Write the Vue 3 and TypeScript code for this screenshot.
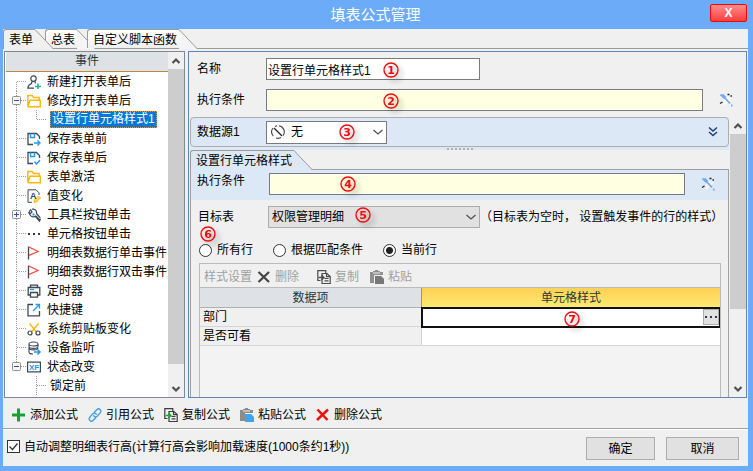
<script setup lang="ts">
import { h, ref, type FunctionalComponent } from 'vue'

interface Stroke {
  d: string
  c?: string
  w?: number
  f?: string
}
interface Glyph {
  paths: Stroke[]
  text?: { value: string; x: number; y: number; size: number; c: string }
}

const ink = '#3f4856'
const blue = '#1f9bef'
const gold = '#fbb80f'

const copyPaths = (c: string, arrow: string): Stroke[] => [
  { d: 'M3.500 10.500H.8V.7h8v2.800M5 3.500h5l3.200 3v7H5zM7.500 8.500h4M7.500 10.800h4M9.500 3.500v3.200h3.500', c, w: 1.2 },
  { d: 'M1.500 7.500h5M4.500 5l2.500 2.500L4.500 10', c: arrow, w: 1.3 },
]

const glyphs: Record<string, Glyph> = {
  user: { paths: [
    { d: 'M6.500 .8a2.700 2.800 0 1 1 0 5.600a2.700 2.800 0 1 1 0-5.600M5 6.500L4.500 8.500C2 9.500 1 10.500 .8 13.200H7M8 6.500l.4 1.800', c: ink, w: 1.2 },
    { d: 'M8 11.500h6M11 8.500v6', c: '#1fb784', w: 1.5 },
  ] },
  folder: { paths: [{ d: 'M.8 12.800V1.500h4.500l1.200 2h5.700v2.700M.8 12.800L3 6.300h10.300v6.500H.8', c: gold, w: 1.4 }] },
  saveArrow: { paths: [
    { d: 'M6 12.500H1v-11h8.500l3 3V7', c: ink, w: 1.3 },
    { d: 'M3.500 1.500v4h4v-4M7 11h5M10.500 8.500L13 11l-2.500 2.500', c: blue, w: 1.4 },
  ] },
  saveCheck: { paths: [
    { d: 'M6 12.500H1v-11h8.500l3 3V7', c: ink, w: 1.3 },
    { d: 'M3.500 1.500v4h4v-4M7.500 10.500l2 2.500 3.500-4', c: blue, w: 1.4 },
  ] },
  edit: {
    paths: [
      { d: 'M5 13.300H1V.8h8l3 3V6', c: ink },
      { d: 'M7 13.500l.5-2.500L11.500 7l2 2-4 4z', c: gold, f: '#fdd76b' },
    ],
    text: { value: 'A', x: 3, y: 10, size: 9, c: ink },
  },
  wrench: { paths: [
    { d: 'M4 1.500a4 4 0 1 0 5 6.500L13 12.500M9.500 5.500L13.300 10M3.500 1.500L5 4 3.500 5.500 1 4.500M5 1.200C8 .5 10 3 9.500 5.500M8.500 8.500l4 4.700 1-2.500', c: ink, w: 1.2 },
    { d: 'M5.500 5.500h2v2h-2z', f: blue },
  ] },
  dots: { paths: [{ d: 'M1 6h2v2H1zM6 6h2v2H6zM11 6h2v2h-2z', f: '#303846' }] },
  flag: { paths: [
    { d: 'M1.500 .5v13', c: ink, w: 1.3 },
    { d: 'M2 1l9 4.500L2 9.300', c: '#f34f43', w: 1.3 },
  ] },
  printer: { paths: [
    { d: 'M3.500 3V1.200h7V3M3 11H1.200V3.500h11.600V11H11M3.500 8.500h7v4.700h-7z', c: ink, w: 1.3 },
    { d: 'M3 5.500h4', c: blue, w: 1.3 },
  ] },
  shortcut: { paths: [
    { d: 'M6 1.500H1v11.300h11.500V8', c: ink, w: 1.3 },
    { d: 'M6 8l6-6M8.500 1.500h4v4', c: blue, w: 1.3 },
  ] },
  scissors: { paths: [
    { d: 'M2.500 1.500L9.500 10M11.500 1.500L4.500 10', c: gold, w: 1.4 },
    { d: 'M3 9a2 2 0 1 1 0 4a2 2 0 1 1 0-4M11 9a2 2 0 1 1 0 4a2 2 0 1 1 0-4', c: ink, w: 1.2 },
  ] },
  database: { paths: [
    { d: 'M6.500 1c6 0 6 4 0 4s-6-4 0-4M2 3v2.500c0 2.500 9 2.500 9 0V3M2 7c0 2.500 9 2.500 9 0M2 6.500v4.500c0 1.500 2 2 4 2', c: ink, w: 1.1 },
    { d: 'M7 11h5M10.500 8.500L13 11l-2.500 2.500', c: blue, w: 1.5 },
  ] },
  xf: {
    paths: [{ d: 'M.6 2.100h12.800v9.800H.6z', c: ink, w: 1.2 }],
    text: { value: 'XF', x: 2, y: 10, size: 8, c: blue },
  },
  plus: { paths: [{ d: 'M0 7h13M6.500 .5v13', c: '#12a52a', w: 3 }] },
  link: { paths: [{ d: 'M6 4.500L9 1.500c2-2 5 1 3.300 3.200L9.500 8c-1.500 1.500-3.500 1-4-.8M8 9.500l-3 3c-2 2-5-1-3.300-3.200L4.500 6c1.500-1.500 3.500-1 4 .8', c: '#3f9bea', w: 1.3 }] },
  copy: { paths: copyPaths('#3c3c3c', '#16a532') },
  copyOff: { paths: copyPaths('#4b4b4b', '#4b4b4b') },
  paste: { paths: [
    { d: 'M0 2h3V1h2V0h3v1h2v1h3v3H5v8H0z', f: '#8c8c8c' },
    { d: 'M3 3h7', c: '#efefef' },
    { d: 'M5 6h6l3 3v5H5z', f: '#41a2ee' },
  ] },
  pasteOff: { paths: [
    { d: 'M0 2h3V1h2V0h3v1h2v1h3v3H5v8H0z', f: '#8f8f8f' },
    { d: 'M3 3h7', c: '#efefef' },
    { d: 'M4.500 14V5.500H13', c: '#efefef' },
    { d: 'M5 6h6l3 3v5H5z', f: '#777777' },
  ] },
  cross: { paths: [{ d: 'M1.500 1.500l10 10.500M12 1.500L1 12', c: '#f00f0f', w: 2.5 }] },
  crossOff: { paths: [{ d: 'M1.500 2l10.500 10M12 2L1.500 12', c: '#444444', w: 2.2 }] },
  tools: { paths: [
    { d: 'M4.500 9.500L9.500 4M5 12l7-7', c: '#ffffff', w: 1.4 },
    { d: 'M1.500 1.500l4.500 4M3.500 1.500L6.500 4.500M6 5l5 5.500M12 12.500h1.500', c: '#74a9f2', w: 1.8 },
    { d: 'M1 10.500l2.500-1.500M8.500 1.500h2M11.500 3h1.500', c: '#222222', w: 1.3 },
  ] },
  none: { paths: [
    { d: 'M3 3l8 8', c: '#222222', w: 1.3 },
    { d: 'M8 .7a6.300 6.300 0 0 1 4 10M10 12.600A6.300 6.300 0 0 1 5 13M2.300 11A6.300 6.300 0 0 1 2 3M4 1.500L6 .8', c: '#444444', w: 1.1 },
  ] },
  chevronDown: { paths: [{ d: 'M2.500 5l4.500 4 4.500-4', c: '#505050', w: 1.3 }] },
  expand: { paths: [{ d: 'M3 2.500l4 3.500 4-3.500M3 7l4 3.500L11 7', c: '#1f3f7a', w: 1.5 }] },
  arrowUp: { paths: [{ d: 'M3.500 9L7 5.500 10.500 9', c: '#505050', w: 2.2 }] },
  arrowDown: { paths: [{ d: 'M3.500 5L7 8.500 10.500 5', c: '#505050', w: 2.2 }] },
}

const Icon: FunctionalComponent<{ name: string }> = (props) => {
  const g = glyphs[props.name]
  return h('svg', { viewBox: '0 0 14 14', width: 14, height: 14, 'aria-hidden': 'true' }, [
    ...g.paths.map((p) =>
      h('path', { d: p.d, fill: p.f ?? 'none', stroke: p.c ?? 'none', 'stroke-width': p.w ?? 1 })),
    g.text
      ? h('text', { x: g.text.x, y: g.text.y, fill: g.text.c, 'font-size': g.text.size, 'font-weight': 700 }, g.text.value)
      : null,
  ])
}
Icon.props = ['name']

const Badge: FunctionalComponent<{ n: number }> = (props) =>
  h('svg', { viewBox: '0 0 16 16', width: 16, height: 16 }, [
    h('circle', { cx: 8, cy: 8, r: 7, fill: 'none', stroke: '#f5090f', 'stroke-width': 1.4 }),
    h('text', { x: 8, y: 12, 'text-anchor': 'middle', fill: '#f5090f', 'font-size': 11, 'font-weight': 700 }, String(props.n)),
  ])
Badge.props = ['n']

interface Node {
  label: string
  icon?: string
  box?: '+' | '-'
  child?: boolean
  trunk: 'start' | 'through' | 'end' | 'off'
  selected?: boolean
}
const nodes: Node[] = [
  { label: '新建打开表单后', icon: 'user', trunk: 'start' },
  { label: '修改打开表单后', icon: 'folder', box: '-', trunk: 'through' },
  { label: '设置行单元格样式1', child: true, trunk: 'through', selected: true },
  { label: '保存表单前', icon: 'saveArrow', trunk: 'through' },
  { label: '保存表单后', icon: 'saveCheck', trunk: 'through' },
  { label: '表单激活', icon: 'folder', trunk: 'through' },
  { label: '值变化', icon: 'edit', trunk: 'through' },
  { label: '工具栏按钮单击', icon: 'wrench', box: '+', trunk: 'through' },
  { label: '单元格按钮单击', icon: 'dots', trunk: 'through' },
  { label: '明细表数据行单击事件', icon: 'flag', trunk: 'through' },
  { label: '明细表数据行双击事件', icon: 'flag', trunk: 'through' },
  { label: '定时器', icon: 'printer', trunk: 'through' },
  { label: '快捷键', icon: 'shortcut', trunk: 'through' },
  { label: '系统剪贴板变化', icon: 'scissors', trunk: 'through' },
  { label: '设备监听', icon: 'database', trunk: 'through' },
  { label: '状态改变', icon: 'xf', box: '-', trunk: 'end' },
  { label: '锁定前', child: true, trunk: 'off' },
]
function trunkPath(n: Node): string {
  const v = { start: 'M11.500 10V19', through: 'M11.500 0V19', end: 'M11.500 0V10', off: '' }[n.trunk]
  if (!n.child) return v + 'M12 9.500H22'
  return v + (n.selected ? 'M31.500 0V10' : 'M31.500 0V19') + 'M32 9.500H42'
}

const tabs = ['表单', '总表', '自定义脚本函数']
const commands = [
  { label: '添加公式', icon: 'plus' },
  { label: '引用公式', icon: 'link' },
  { label: '复制公式', icon: 'copy' },
  { label: '粘贴公式', icon: 'paste' },
  { label: '删除公式', icon: 'cross' },
]
const scopes = ['所有行', '根据匹配条件', '当前行']

const name = ref('设置行单元格样式1')
const condition = ref('')
const styleCondition = ref('')
const scope = ref('当前行')
const autoHeight = ref(true)
const cellStyle = ref('')
</script>

<template>
  <div class="window">
    <header class="titlebar">
      <h1>填表公式管理</h1>
      <button class="close" type="button" aria-label="关闭">X</button>
    </header>

    <main class="client">
      <nav class="tabs">
        <button v-for="(t, i) in tabs" :key="t" type="button" class="tab" :class="{ active: i === 0 }">
          <span class="tab-body">{{ t }}</span>
          <svg class="slope" width="18" height="20" viewBox="0 0 18 20" aria-hidden="true">
            <path class="slope-fill" d="M0 0L18 20H0z" />
            <path class="slope-line" d="M0 .5L18 19.500" />
          </svg>
        </button>
      </nav>

      <div class="panes">
        <section class="tree">
          <div class="tree-main">
            <h2>事件</h2>
            <ul>
              <li v-for="n in nodes" :key="n.label">
                <svg class="gutter" :width="n.child ? 42 : 22" height="19" aria-hidden="true">
                  <path class="dotted" :d="trunkPath(n)" />
                  <template v-if="n.box">
                    <rect x="7.500" y="5.500" width="8" height="8" rx="1" fill="#f6f6f6" stroke="#919191" />
                    <path :d="n.box === '+' ? 'M9 9.500h5M11.500 7v5' : 'M9 9.500h5'" stroke="#3350a0" />
                  </template>
                </svg>
                <Icon v-if="n.icon" :name="n.icon" />
                <span class="node" :class="{ child: n.child, selected: n.selected }">{{ n.label }}</span>
              </li>
            </ul>
          </div>
          <div class="scrollbar">
            <button type="button" aria-label="向上"><Icon name="arrowUp" /></button>
            <div class="track"><div class="thumb tall"></div></div>
            <button type="button" aria-label="向下"><Icon name="arrowDown" /></button>
          </div>
        </section>

        <section class="editor">
          <div class="form">
            <div class="row">
              <label for="name">名称</label>
              <div class="field name-field">
                <input id="name" v-model="name" type="text" />
                <Badge class="badge b1" :n="1" />
              </div>
            </div>
            <div class="row">
              <label for="condition">执行条件</label>
              <div class="field grow">
                <input id="condition" v-model="condition" class="formula" type="text" />
                <Badge class="badge b2" :n="2" />
              </div>
              <button class="wizard" type="button" aria-label="编辑"><Icon name="tools" /></button>
            </div>
          </div>

          <div class="lower">
            <div class="content">
              <div class="source-wrap">
                <div class="source">
                  <label for="source">数据源1</label>
                  <div class="field source-field">
                    <select id="source"><option>无</option></select>
                    <Icon class="lead" name="none" />
                    <Icon class="caret" name="chevronDown" />
                    <Badge class="badge b3" :n="3" />
                  </div>
                  <button class="more" type="button" aria-label="展开"><Icon name="expand" /></button>
                </div>
                <div class="splitter"><i v-for="k in 7" :key="k"></i></div>
              </div>

              <div class="inner-tabs">
                <button type="button" class="tab inner active">
                  <span class="tab-body">设置行单元格样式</span>
                  <svg class="slope" width="18" height="20" viewBox="0 0 18 20" aria-hidden="true">
                    <path class="slope-fill" d="M0 0L18 20H0z" />
                    <path class="slope-line" d="M0 .5L18 19.500" />
                  </svg>
                </button>
              </div>

              <div class="sheet">
                <div class="cond">
                  <label for="style-condition">执行条件</label>
                  <div class="field grow">
                    <input id="style-condition" v-model="styleCondition" class="formula" type="text" />
                    <Badge class="badge b4" :n="4" />
                  </div>
                  <button class="wizard" type="button" aria-label="编辑"><Icon name="tools" /></button>
                </div>
                <div class="target">
                  <label for="target">目标表</label>
                  <div class="field target-field">
                    <select id="target"><option>权限管理明细</option></select>
                    <Icon class="caret" name="chevronDown" />
                    <Badge class="badge b5" :n="5" />
                  </div>
                  <span class="hint">（目标表为空时， 设置触发事件的行的样式）</span>
                </div>
                <div class="scopes">
                  <label v-for="s in scopes" :key="s">
                    <input v-model="scope" type="radio" name="scope" :value="s" />{{ s }}
                  </label>
                  <Badge class="badge b6" :n="6" />
                </div>
                <div class="grid">
                  <div class="grid-tools">
                    <button type="button">样式设置</button>
                    <button type="button"><Icon name="crossOff" />删除</button>
                    <button type="button" class="spaced"><Icon name="copyOff" />复制</button>
                    <button type="button"><Icon name="pasteOff" />粘贴</button>
                  </div>
                  <table>
                    <thead>
                      <tr><th class="item">数据项</th><th class="style">单元格样式</th></tr>
                    </thead>
                    <tbody>
                      <tr>
                        <td>部门</td>
                        <td class="value current">
                          <div class="cell">
                            <input v-model="cellStyle" type="text" aria-label="单元格样式" />
                            <button type="button" aria-label="选择"><Icon name="dots" /></button>
                            <Badge class="badge b7" :n="7" />
                          </div>
                        </td>
                      </tr>
                      <tr><td>是否可看</td><td class="value"></td></tr>
                    </tbody>
                  </table>
                </div>
              </div>
            </div>
            <div class="scrollbar">
              <button type="button" aria-label="向上"><Icon name="arrowUp" /></button>
              <div class="track"><div class="thumb short"></div></div>
              <button type="button" aria-label="向下"><Icon name="arrowDown" /></button>
            </div>
          </div>
        </section>
      </div>

      <div class="commands">
        <button v-for="c in commands" :key="c.label" type="button"><Icon :name="c.icon" />{{ c.label }}</button>
      </div>

      <footer>
        <label class="check">
          <input v-model="autoHeight" type="checkbox" />
          <svg class="tick" width="13" height="13" viewBox="0 0 13 13" aria-hidden="true">
            <path v-if="autoHeight" d="M2.500 6.500l3 3 5-6" />
          </svg>
          <span>自动调整明细表行高(计算行高会影响加载速度(1000条约1秒))</span>
        </label>
        <button class="action" type="button">确定</button>
        <button class="action wide" type="button">取消</button>
      </footer>
    </main>
  </div>
</template>

<style>
body {
  margin: 0;
}
</style>

<style scoped>
.window {
  box-sizing: border-box;
  height: 100vh;
  padding: 0 5px 5px 3px;
  display: flex;
  flex-direction: column;
  background: #6cabf7;
  color: #000;
  font: 12px/16px "Liberation Sans", "Noto Sans CJK SC", sans-serif;
  white-space: nowrap;
}
.window *,
.window *::before {
  box-sizing: border-box;
}
button,
input,
select {
  margin: 0;
  padding: 0;
  border: 0;
  border-radius: 0;
  background: none;
  color: inherit;
  font: inherit;
  outline: 0;
}
svg {
  display: block;
  flex: none;
}
h1,
h2,
ul {
  margin: 0;
  padding: 0;
  font-weight: 400;
}
.titlebar {
  position: relative;
  flex: none;
  height: 29px;
  display: flex;
  align-items: center;
  justify-content: center;
}
.titlebar h1 {
  color: #fff;
  font-size: 15px;
}
.close {
  position: absolute;
  top: 4px;
  right: 1px;
  width: 37px;
  height: 18px;
  border: 1px solid #f00;
  border-radius: 2px;
  background: linear-gradient(#ff8c8c, #fb3e3e);
  color: #fff;
  font-weight: 700;
}
.client {
  flex: 1;
  min-height: 0;
  display: flex;
  flex-direction: column;
  background: #f0f0f0;
}

.tabs {
  flex: none;
  height: 20px;
  display: flex;
  border-bottom: 1px solid #9b9b9b;
}
.tab {
  position: relative;
  height: 20px;
  display: flex;
}
.tab + .tab {
  margin-left: -8px;
}
.tab.active {
  z-index: 1;
}
.tab-body {
  height: 19px;
  padding: 2px 2px 0 5px;
  border: solid #9b9b9b;
  border-width: 1px 0 0 1px;
  border-radius: 3px 0 0 0;
  background: linear-gradient(#fff, #f0f0f0);
}
.slope-fill {
  fill: #f5f5f5;
}
.slope-line {
  fill: none;
  stroke: #9b9b9b;
}
.tab.active .tab-body {
  height: 20px;
  background: #f0f0f0;
}
.tab.active .slope-fill {
  fill: #f0f0f0;
}

.panes {
  flex: 1;
  min-height: 0;
  display: flex;
  gap: 3px;
  padding: 2px 1px 0;
}
.tree {
  flex: 0 1 181px;
  display: flex;
  border: 1px solid #828790;
  background: #fff;
}
.tree-main {
  flex: 1;
  min-width: 0;
  overflow: hidden;
}
.tree h2 {
  height: 20px;
  margin-left: 1px;
  border-bottom: 1px solid #bd8a35;
  background: #dee1e6;
  color: #1d3a3a;
  font-size: 12px;
  line-height: 19px;
  text-align: center;
}
.tree ul {
  list-style: none;
}
.tree li {
  height: 19px;
  display: flex;
  align-items: center;
}
.dotted {
  fill: none;
  stroke: #9a9a9a;
  stroke-dasharray: 1 1;
}
.node {
  margin-left: 6px;
}
.node.child {
  margin-left: 3px;
}
.node.selected {
  height: 17px;
  padding: 0 2px;
  outline: 1px dotted #e39348;
  outline-offset: -1px;
  background: #0078d7;
  color: #fff;
}
.scrollbar {
  flex: 0 0 16px;
  display: flex;
  flex-direction: column;
  background: #f0f0f0;
}
.scrollbar button {
  flex: none;
  height: 17px;
  padding-left: 1px;
}
.track {
  flex: 1;
}
.thumb {
  background: #cdcdcd;
}
.thumb.tall {
  height: 95%;
}
.thumb.short {
  height: 71%;
}

.editor {
  flex: 1;
  min-width: 0;
  display: flex;
  flex-direction: column;
  border: 1px solid #5f85b0;
}
.form {
  flex: none;
  display: flex;
  flex-direction: column;
  gap: 9px;
  padding: 6px 13px 6px 8px;
}
.row {
  display: flex;
  align-items: center;
  height: 22px;
}
.row label,
.source label {
  flex: 0 0 69px;
}
.field {
  position: relative;
}
.field.grow {
  flex: 1;
  min-width: 0;
}
.name-field {
  flex: 0 1 214px;
}
.field input,
.field select {
  display: block;
  width: 100%;
  height: 22px;
  padding: 0 2px 0 1px;
  border: 1px solid #7a7a7a;
  background: #fff;
}
.field input.formula {
  background: #ffffe1;
  box-shadow: inset 0 0 0 1px #fff;
}
.field select {
  appearance: none;
}
.wizard {
  margin-left: 16px;
}
.lower {
  flex: 1;
  min-height: 0;
  display: flex;
  gap: 1px;
  padding-left: 1px;
}
.content {
  flex: 1;
  min-width: 0;
  display: flex;
  flex-direction: column;
}
.source-wrap {
  position: relative;
  flex: none;
  padding-bottom: 3px;
  background: #dde8f6;
}
.source {
  height: 30px;
  display: flex;
  align-items: center;
  padding: 0 8px 0 6px;
  border: 1px solid #adadad;
  border-radius: 4px;
}
.source-field {
  flex: 0 1 121px;
}
.source-field select {
  height: 23px;
  padding-left: 24px;
}
.lead {
  position: absolute;
  left: 5px;
  top: 4px;
}
.caret {
  position: absolute;
  right: 2px;
  top: 4px;
  pointer-events: none;
}
.more {
  margin-left: auto;
}
.splitter {
  position: absolute;
  left: 0;
  right: 0;
  bottom: 0;
  display: flex;
  justify-content: center;
  gap: 2px;
}
.splitter i {
  width: 2px;
  height: 2px;
  background: #b0b0b0;
}
.inner-tabs {
  flex: none;
  height: 20px;
  border-bottom: 1px solid #a0a0a0;
}
.tab.inner .tab-body {
  background: #dde8f6;
}
.tab.inner .slope-fill {
  fill: #dde8f6;
}
.sheet {
  flex: 1;
  min-height: 0;
  display: flex;
  flex-direction: column;
  border: solid #a0a0a0;
  border-width: 0 1px;
}
.cond {
  flex: none;
  height: 30px;
  display: flex;
  align-items: center;
  padding: 0 13px 2px 6px;
  background: #dde8f6;
}
.cond label {
  flex: 0 0 72px;
  height: 22px;
}
.target {
  flex: none;
  display: flex;
  align-items: center;
  padding: 6px 0 0 7px;
}
.target label {
  flex: 0 0 70px;
}
.target-field {
  flex: 0 1 212px;
}
.target-field select {
  background: #e1e1e1;
  border-color: #adadad;
  padding-left: 3px;
}
.scopes {
  position: relative;
  flex: none;
  height: 35px;
  display: flex;
  align-items: flex-end;
  gap: 20px;
  padding: 0 8px 5px;
}
.scopes label {
  display: flex;
  align-items: center;
  gap: 5px;
}
.scopes input {
  appearance: none;
  width: 13px;
  height: 13px;
  border: 1px solid #333;
  border-radius: 50%;
  background: #fff;
}
.scopes input:checked {
  background: radial-gradient(circle, #222 3px, #fff 4px);
}
.grid {
  flex: 1;
  min-height: 0;
  margin: 0 7px 0 8px;
  overflow: hidden;
  border: solid #bbb;
  border-width: 1px 1px 0;
  background: #f3f3f3;
}
.grid-tools {
  height: 24px;
  display: flex;
  align-items: center;
  gap: 5px;
  padding: 2px 4px 0;
  border-bottom: 1px solid #bbb;
  background: #f0f0f0;
  color: #a0a0a0;
}
.grid-tools button,
.commands button {
  display: flex;
  align-items: center;
  gap: 4px;
}
.grid-tools .spaced {
  margin: 0 6px 0 13px;
}
table {
  width: 100%;
  table-layout: fixed;
  border-collapse: separate;
  border-spacing: 0;
}
th,
td {
  padding: 0;
}
th {
  height: 20px;
  border-bottom: 1px solid #b0b0b0;
  background: #dee1e6;
  color: #1d3a3a;
  font-weight: 400;
}
.item {
  width: 222px;
  border-right: 1px solid #b59347;
}
th.style {
  border-bottom-color: #b88a2e;
  background: linear-gradient(#ffd156, #ffe970);
}
td {
  height: 19px;
  padding-left: 3px;
  border: solid #d5d5d5;
  border-width: 0 1px 1px 0;
  background: #f0f0f0;
}
td.value {
  padding: 0;
  border-right: 0;
  background: #fff;
}
td.current {
  outline: 2px solid #111;
  outline-offset: -1px;
}
.cell {
  position: relative;
  height: 18px;
  display: flex;
  padding: 1px;
}
.cell input {
  flex: 1;
  min-width: 0;
}
.cell button {
  width: 16px;
  border: 1px solid #adadad;
  background: #e1e1e1;
}

.badge {
  position: absolute;
  overflow: visible;
  pointer-events: none;
  font-family: "DejaVu Sans", sans-serif;
  filter: drop-shadow(4px 4px 2px rgba(0, 0, 0, 0.25));
}
.b1,
.b2 {
  left: 117px;
  top: 4px;
}
.b3 {
  left: 73px;
  top: 3px;
}
.b4 {
  left: 71px;
  top: 3px;
}
.b5 {
  left: 87px;
  top: 1px;
}
.b6 {
  left: 9px;
  top: -2px;
}
.b7 {
  left: calc(50% - 7px);
  top: 3px;
}

.commands {
  flex: none;
  height: 31px;
  display: flex;
  align-items: center;
  gap: 10px;
  padding: 3px 9px 0;
  border-bottom: 1px solid #a0a0a0;
  box-shadow: 0 1px #fff;
}
footer {
  flex: none;
  display: flex;
  align-items: center;
  gap: 11px;
  padding: 8px 9px 6px 4px;
}
.check {
  position: relative;
  display: flex;
  align-items: center;
  gap: 4px;
  margin: 0 auto 4px 0;
}
.check input {
  appearance: none;
  width: 13px;
  height: 13px;
  border: 1px solid #333;
  background: #fff;
}
.tick {
  position: absolute;
  left: 0;
  pointer-events: none;
}
.tick path {
  fill: none;
  stroke: #333;
  stroke-width: 1.3;
}
.action {
  width: 69px;
  height: 23px;
  border: 1px solid #adadad;
  background: #e1e1e1;
}
.action.wide {
  width: 73px;
}
</style>
